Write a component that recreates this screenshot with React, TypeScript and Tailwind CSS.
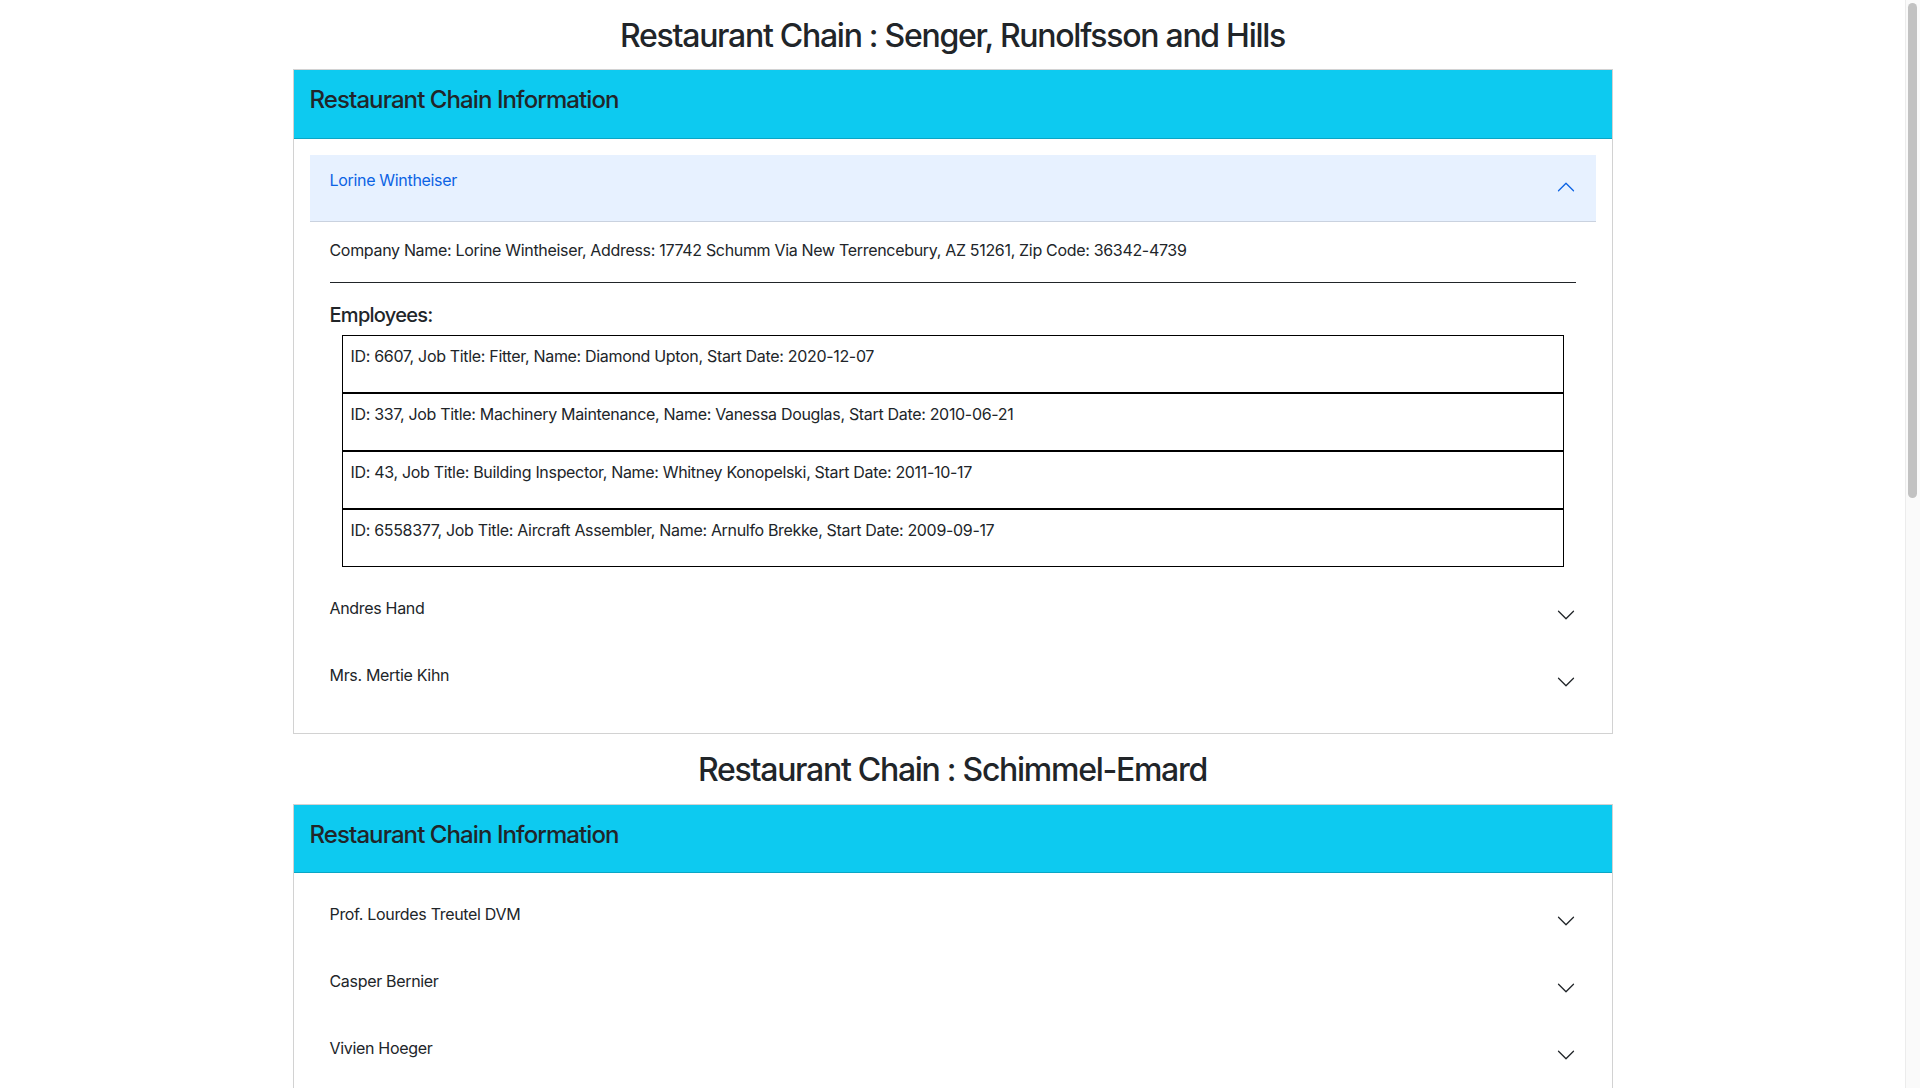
import { useState } from "react";

type Employee = { id: number; jobTitle: string; name: string; startDate: string };
type Company = { name: string; address: string; zip: string; employees: Employee[] };
type Chain = { name: string; companies: Company[] };

const chains: Chain[] = [
  {
    name: "Senger, Runolfsson and Hills",
    companies: [
      {
        name: "Lorine Wintheiser",
        address: "17742 Schumm Via New Terrencebury, AZ 51261",
        zip: "36342-4739",
        employees: [
          { id: 6607, jobTitle: "Fitter", name: "Diamond Upton", startDate: "2020-12-07" },
          { id: 337, jobTitle: "Machinery Maintenance", name: "Vanessa Douglas", startDate: "2010-06-21" },
          { id: 43, jobTitle: "Building Inspector", name: "Whitney Konopelski", startDate: "2011-10-17" },
          { id: 6558377, jobTitle: "Aircraft Assembler", name: "Arnulfo Brekke", startDate: "2009-09-17" },
        ],
      },
      { name: "Andres Hand", address: "", zip: "", employees: [] },
      { name: "Mrs. Mertie Kihn", address: "", zip: "", employees: [] },
    ],
  },
  {
    name: "Schimmel-Emard",
    companies: [
      { name: "Prof. Lourdes Treutel DVM", address: "", zip: "", employees: [] },
      { name: "Casper Bernier", address: "", zip: "", employees: [] },
      { name: "Vivien Hoeger", address: "", zip: "", employees: [] },
    ],
  },
  {
    name: "Kuhlman Group",
    companies: [
      { name: "Ms. Elna Rau", address: "", zip: "", employees: [] },
      { name: "Dr. Garfield Kub", address: "", zip: "", employees: [] },
      { name: "Tressa Lind", address: "", zip: "", employees: [] },
    ],
  },
];

function Chevron({ open }: { open: boolean }) {
  return (
    <svg
      viewBox="0 0 16 16"
      className={open ? "w-5 h-5 shrink-0 rotate-180 fill-[#0c63e4]" : "w-5 h-5 shrink-0 fill-[#212529]"}
    >
      <path
        fillRule="evenodd"
        d="M1.646 4.646a.5.5 0 0 1 .708 0L8 10.293l5.646-5.647a.5.5 0 0 1 .708.708l-6 6a.5.5 0 0 1-.708 0l-6-6a.5.5 0 0 1 0-.708z"
      />
    </svg>
  );
}

function CompanyItem({ company, defaultOpen }: { company: Company; defaultOpen: boolean }) {
  const [open, setOpen] = useState(defaultOpen);
  return (
    <div>
      <button
        onClick={() => setOpen(!open)}
        className={
          open
            ? "w-full flex items-center justify-between px-5 pt-[13px] pb-4 text-left tracking-[-0.02em] bg-[#e7f1ff] text-[#0c63e4] shadow-[inset_0_-1px_0_rgba(0,0,0,0.125)]"
            : "w-full flex items-center justify-between px-5 pt-[13px] pb-4 text-left tracking-[-0.02em]"
        }
      >
        <div className="pb-[14px] leading-6">{company.name}</div>
        <Chevron open={open} />
      </button>
      {open && (
        <div className="px-5 py-4">
          <p className="leading-6 tracking-[-0.02em]">
            Company Name: {company.name}, Address: {company.address}, Zip Code: {company.zip}
          </p>
          <hr className="my-5 border-t border-[#212529]" />
          <h5 className="text-xl font-medium leading-[1.2] mb-2 tracking-[-0.036em]">Employees:</h5>
          <ul className="mx-3">
            {company.employees.map((e) => (
              <li key={e.id} className="border border-black px-2 pt-2 pb-6 leading-6 tracking-[-0.02em]">
                ID: {e.id}, Job Title: {e.jobTitle}, Name: {e.name}, Start Date: {e.startDate}
              </li>
            ))}
          </ul>
        </div>
      )}
    </div>
  );
}

function ChainSection({ chain, first }: { chain: Chain; first: boolean }) {
  return (
    <section>
      <h2 className="pt-[17px] mb-[14px] text-center text-[32px] font-medium leading-[1.2] tracking-[-0.04em]">
        Restaurant Chain : {chain.name}
      </h2>
      <div className="border border-black/[0.175] bg-white">
        <div className="bg-[#0dcaf0] p-4 border-b border-black/[0.175]">
          <h4 className="text-2xl font-medium leading-[1.2] mb-[7px] tracking-[-0.038em]">
            Restaurant Chain Information
          </h4>
        </div>
        <div className="p-4">
          {chain.companies.map((c, i) => (
            <CompanyItem key={c.name} company={c} defaultOpen={first && i === 0} />
          ))}
        </div>
      </div>
    </section>
  );
}

export default function App() {
  return (
    <div className="flex h-screen bg-white text-[#212529] text-base font-['Inter','Liberation_Sans',sans-serif]">
      <main className="flex-1 overflow-y-auto">
        <div className="w-[1320px] mx-auto pb-24">
          {chains.map((chain, i) => (
            <ChainSection key={chain.name} chain={chain} first={i === 0} />
          ))}
        </div>
      </main>
      {/* scrollbar gutter as seen in the screenshot */}
      <aside className="w-[15px] shrink-0 border-l border-[#ececec] bg-[#fafafa] pl-[2px] pt-[3px]">
        <div className="h-[495px] w-[9px] rounded-full bg-[#c2c2c2]" />
      </aside>
    </div>
  );
}
